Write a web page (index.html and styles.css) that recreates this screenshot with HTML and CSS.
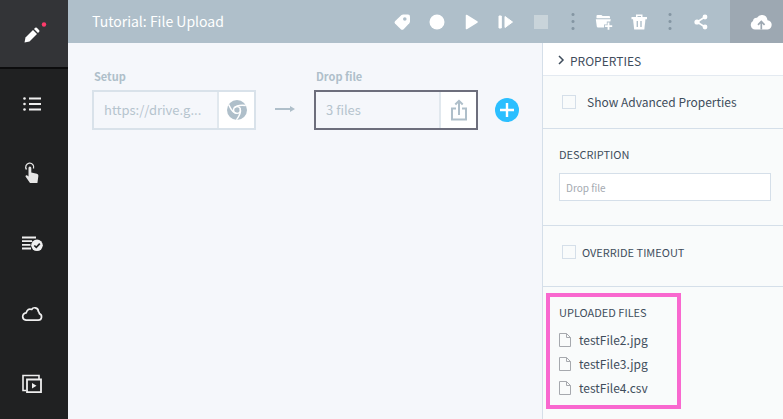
FILE: index.html
```html
<!DOCTYPE html>
<html lang="en">
<head>
    <meta charset="UTF-8">
    <meta name="viewport" content="width=device-width, initial-scale=1.0">
    <title>Tutorial: File Upload</title>
    <link rel="stylesheet" href="styles.css">
</head>
<body>
    <nav class="sidebar">
        <button class="nav-item active" aria-label="Editor">
            <svg width="24" height="24" viewBox="0 0 24 24">
                <path d="M4.500 20.500l1-5L13 8l4 4-7.500 7.500z" fill="#fff"/>
                <path d="M14 7l1.200-1.200q.8-.6 1.600 0l2.400 2.400q.6.800 0 1.600L18 11z" fill="#fff"/>
                <circle cx="24" cy="2.500" r="2.200" fill="#ff3b6b"/>
            </svg>
        </button>
        <button class="nav-item" aria-label="Test list">
            <svg width="20" height="20" viewBox="0 0 20 20" fill="#efefef">
                <path d="M7 3.500h12v2H7zM7 9h12v2H7zM7 14.500h12v2H7z"/>
                <circle cx="2.500" cy="4.500" r="1.300"/><circle cx="2.500" cy="10" r="1.300"/><circle cx="2.500" cy="15.500" r="1.300"/>
            </svg>
        </button>
        <button class="nav-item" aria-label="Shared steps">
            <svg width="20" height="22" viewBox="0 0 20 22">
                <path d="M4.500 6.500A4 4 0 1 1 11.500 5.500" fill="none" stroke="#e6e6e6" stroke-width="1.300"/>
                <path d="M6.500 5q0-1.500 1.400-1.500T9.300 5v4.500l5.500 1.300q1.700.5 1.600 2l-1 7.200H8L3.500 13.500q0-1.500 1.500-1.200L6.500 13.500z" fill="#e6e6e6"/>
            </svg>
        </button>
        <button class="nav-item" aria-label="Results">
            <svg width="22" height="18" viewBox="0 0 22 18">
                <path d="M1 2.500h14M1 6.200h10M1 9.800h8.500M1 13.500h9" stroke="#efefef" stroke-width="1.800"/>
                <circle cx="16" cy="10.300" r="5.800" fill="#efefef"/>
                <path d="M13.300 10.500l2 1.900 3.500-3.700" fill="none" stroke="#202122" stroke-width="1.700"/>
            </svg>
        </button>
        <button class="nav-item" aria-label="Cloud">
            <svg width="22" height="18" viewBox="0 0 22 18">
                <path d="M5 15.200h12.300a3.400 3.400 0 0 0 1-6.600q.2-1.500-1-2.200.2-3-3-3.600-2.500-.4-3.600 1.700Q6.800 3 5.200 7.800 1.700 8.300 1.700 11.700q.2 3 3.300 3.500z" fill="none" stroke="#efefef" stroke-width="1.700" stroke-linejoin="round"/>
            </svg>
        </button>
        <button class="nav-item" aria-label="Runs">
            <svg width="20" height="20" viewBox="0 0 20 20">
                <path d="M4 16.500H1V1.500h16v3.500" fill="none" stroke="#efefef" stroke-width="1.600"/>
                <path d="M5 5.500h14v12.700H5z" fill="none" stroke="#efefef" stroke-width="1.800"/>
                <path d="M10 9l4.500 2.800L10 14.500z" fill="#efefef"/>
            </svg>
        </button>
    </nav>

    <div class="main">
        <header class="topbar">
            <h1 class="title">Tutorial: File Upload</h1>
            <div class="tools">
                <button class="tool" aria-label="Labels">
                    <svg width="18" height="18" viewBox="0 0 18 18">
                        <path d="M2 8.200L8.500 2Q9.300 1.500 10.200 1.500H15Q17 1.500 17 3.500V8.500Q17 9.400 16.300 10.200L10.600 16.200Q9.200 17.300 7.800 16.200L2 10.600Q1 9.400 2 8.200z" fill="#fff"/>
                        <circle cx="11.800" cy="6" r="1.800" fill="#afbfca"/>
                    </svg>
                </button>
                <button class="tool" aria-label="Record">
                    <svg width="16" height="16" viewBox="0 0 16 16"><circle cx="8" cy="8" r="7.500" fill="#fff"/></svg>
                </button>
                <button class="tool" aria-label="Play">
                    <svg width="16" height="16" viewBox="0 0 16 16"><path d="M2.500 1.500L13 8 2.500 14.500z" fill="#fff" stroke="#fff" stroke-width="1.500" stroke-linejoin="round"/></svg>
                </button>
                <button class="tool" aria-label="Play step">
                    <svg width="16" height="16" viewBox="0 0 16 16"><path d="M0 2h2.300v12H0zM6 2.500L13.500 8 6 13.500z" fill="#fff" stroke="#fff" stroke-linejoin="round"/></svg>
                </button>
                <button class="tool" aria-label="Stop" disabled>
                    <svg width="16" height="16" viewBox="0 0 16 16"><path d="M0 1h14v14H0z" fill="#c9d4da"/></svg>
                </button>
                <span class="dots"></span>
                <button class="tool" aria-label="New folder">
                    <svg width="18" height="18" viewBox="0 0 18 18" fill="#fff">
                        <path d="M1.500 5.200V3q0-1 1-1H6q1 0 1.500 1H14q1 0 1 1v1.200z"/>
                        <path d="M.8 6.300h15l-.5 2.200h-3.500v3H9v3H3q-1 0-1.200-1z"/>
                        <path d="M12.600 9.500h1.800v2.700h2.800V14h-2.800v2.700h-1.800V14H9.900v-1.800h2.700z"/>
                    </svg>
                </button>
                <button class="tool" aria-label="Delete">
                    <svg width="16" height="18" viewBox="0 0 16 18" fill="#fff">
                        <path d="M5 5V1.500h6.500V5H10V3H6.500v2zM.5 4h15.500v2.300H.5z"/>
                        <path d="M2 6h12.500l-1.200 10.500H3.200z"/>
                        <path d="M6.300 8v6M10 8v6" stroke="#afbfca" stroke-width="1.400"/>
                    </svg>
                </button>
                <span class="dots"></span>
                <button class="tool" aria-label="Share">
                    <svg width="16" height="18" viewBox="0 0 16 18">
                        <path d="M12 4L4 9l8 5" fill="none" stroke="#fff" stroke-width="1.600"/>
                        <circle cx="12" cy="4" r="2.400" fill="#fff"/><circle cx="4" cy="9" r="2.600" fill="#fff"/><circle cx="12" cy="14" r="2.400" fill="#fff"/>
                    </svg>
                </button>
            </div>
            <button class="save" aria-label="Save">
                <svg width="22" height="18" viewBox="0 0 22 18">
                    <path d="M5 16.500A4.600 4.600 0 0 1 3 8Q3.500 4.500 7 4.700 9 1.500 12.500 2q4.500.6 5 5.200 4 .7 4.200 4.600-.2 4-4 4.700z" fill="#fff"/>
                    <path d="M11.300 16.500V9M8 11.800L11.300 8.500l3.300 3.300" fill="none" stroke="#9da8b2" stroke-width="1.700"/>
                </svg>
            </button>
        </header>

        <div class="workspace">
            <main class="canvas">
                <div class="step">
                    <span class="step-name">Setup</span>
                    <div class="step-box">
                        <span class="step-text">https://drive.g...</span>
                        <span class="step-icon">
                            <svg width="20" height="20" viewBox="0 0 20 20">
                                <circle cx="10" cy="10" r="10" fill="#afbfca"/>
                                <g fill="none" stroke="#fff" stroke-width="1.400">
                                    <circle cx="10" cy="10" r="3.400"/>
                                    <path d="M7.200 8Q10 4.500 18.800 5.500"/>
                                    <path d="M7.200 8Q10 4.500 18.800 5.500" transform="rotate(120 10 10)"/>
                                    <path d="M7.200 8Q10 4.500 18.800 5.500" transform="rotate(240 10 10)"/>
                                </g>
                            </svg>
                        </span>
                    </div>
                </div>
                <svg class="arrow" width="20" height="8" viewBox="0 0 20 8">
                    <path d="M0 3h15V1l5 3-5 3V5H0z" fill="#afbfca"/>
                </svg>
                <div class="step">
                    <span class="step-name">Drop file</span>
                    <div class="step-box selected">
                        <span class="step-text">3 files</span>
                        <span class="step-icon">
                            <svg width="18" height="22" viewBox="0 0 18 22" fill="none" stroke="#afbfca" stroke-width="2">
                                <path d="M6 9.500H2V20.500h14V9.500h-4M9 16V2M5.300 5.500L9 1.800l3.700 3.700"/>
                            </svg>
                        </span>
                    </div>
                </div>
                <button class="add" aria-label="Add step">
                    <svg width="24" height="24" viewBox="0 0 24 24">
                        <circle cx="12" cy="12" r="12" fill="#2bbfff"/>
                        <path d="M12 5v14M5 12h14" stroke="#fff" stroke-width="2.400"/>
                    </svg>
                </button>
            </main>

            <aside class="panel">
                <h2 class="panel-header">
                    <svg width="6" height="10" viewBox="0 0 6 10"><path d="M1 0l4 4-4 4" fill="none" stroke="#3f4d5c" stroke-width="1.500"/></svg>
                    PROPERTIES
                </h2>
                <section class="section advanced">
                    <label class="check"><input type="checkbox"> Show Advanced Properties</label>
                </section>
                <section class="section description">
                    <label class="caption" for="description">DESCRIPTION</label>
                    <input type="text" id="description" placeholder="Drop file">
                </section>
                <section class="section timeout">
                    <label class="check caption"><input type="checkbox"> OVERRIDE TIMEOUT</label>
                </section>
                <section class="uploads">
                    <h3 class="caption">UPLOADED FILES</h3>
                    <ul class="files">
                        <li>
                            <svg width="12" height="14" viewBox="0 0 12 14" fill="none" stroke="#a6a9ae"><path d="M.5.5h7l4 4v9H.5zM7.500.5v4h4"/></svg>
                            testFile2.jpg
                        </li>
                        <li>
                            <svg width="12" height="14" viewBox="0 0 12 14" fill="none" stroke="#a6a9ae"><path d="M.5.5h7l4 4v9H.5zM7.500.5v4h4"/></svg>
                            testFile3.jpg
                        </li>
                        <li>
                            <svg width="12" height="14" viewBox="0 0 12 14" fill="none" stroke="#a6a9ae"><path d="M.5.5h7l4 4v9H.5zM7.500.5v4h4"/></svg>
                            testFile4.csv
                        </li>
                    </ul>
                </section>
            </aside>
        </div>
    </div>
</body>
</html>
```
FILE: styles.css
```css
* {
    box-sizing: border-box;
}
body {
    margin: 0;
    min-height: 100vh;
    display: flex;
    font-family: "Noto Sans CJK SC", "Open Sans", sans-serif;
    font-size: 12px;
    line-height: 20px;
    color: #3f4d5c;
    background-color: #f5f7fb;
}
button {
    display: flex;
    align-items: center;
    justify-content: center;
    padding: 0;
    border: none;
    background: none;
    cursor: pointer;
}
svg {
    flex: none;
    overflow: visible;
}

/* sidebar */
.sidebar {
    width: 68px;
    flex: none;
    background-color: #202122;
}
.nav-item {
    width: 100%;
    height: 70px;
    padding-right: 4px;
}
.nav-item.active {
    height: 69px;
    background-color: #333437;
    border-bottom: 2px solid #0c0c0d;
}

.main {
    flex: 1;
    min-width: 0;
    display: flex;
    flex-direction: column;
}

/* top bar */
.topbar {
    display: flex;
    height: 43px;
    background-color: #afbfca;
}
.title {
    flex: 1;
    margin: 0;
    padding-left: 24px;
    font-size: 14px;
    font-weight: 400;
    line-height: 42px;
    color: #fff;
}
.tools {
    display: flex;
    align-items: center;
    padding-right: 12px;
}
.tool {
    width: 35px;
    height: 42px;
}
.dots {
    width: 27px;
    height: 21px;
    background: radial-gradient(circle, #8496a3 1px, transparent 2px) center / 6px 7px repeat-y;
}
.save {
    width: 53px;
    padding-left: 9px;
    background-color: #9da8b2;
}

/* canvas */
.workspace {
    flex: 1;
    display: flex;
}
.canvas {
    flex: 1;
    display: flex;
    align-items: flex-start;
    padding: 23px 16px 23px 24px;
}
.step {
    width: 164px;
}
.step-name {
    display: block;
    padding-left: 2px;
    margin-bottom: 4px;
    font-size: 11px;
    font-weight: 700;
    color: #afbfca;
}
.step-box {
    display: flex;
    height: 40px;
    border: 2px solid #d9e2ea;
}
.step-box.selected {
    border-color: #6d6e7c;
}
.step-text {
    flex: 1;
    padding: 0 10px;
    white-space: nowrap;
    font-size: 13px;
    line-height: 36px;
    color: #b5c4ce;
}
.step-icon {
    width: 37px;
    display: flex;
    align-items: center;
    justify-content: center;
    border-left: 2px solid #e1e8ee;
    background-color: #fff;
}
.arrow {
    margin: 39px 19px 0;
}
.add {
    margin: 32px 0 0 17px;
}

/* properties panel */
.panel {
    width: 241px;
    flex: none;
    border-left: 1px solid #d5dfe9;
    background-color: #f9fbfb;
}
.panel-header {
    display: flex;
    align-items: center;
    gap: 6px;
    height: 33px;
    margin: 0;
    padding: 4px 15px 0;
    border-bottom: 1px solid #e4eaf1;
    background-color: #fff;
    font-size: 12px;
    font-weight: 400;
}
.section {
    padding: 16px 12px 16px 16px;
    border-bottom: 1px solid #d5dfe9;
}
.caption {
    display: block;
    margin: 0;
    font-size: 11px;
    font-weight: 400;
}
.check {
    display: flex;
    align-items: center;
    gap: 6px;
}
.check input {
    appearance: none;
    flex: none;
    width: 14px;
    height: 14px;
    margin: 0 0 0 3px;
    border: 1px solid #d5dfe9;
}
.advanced .check {
    gap: 11px;
}
.description {
    padding-top: 15px;
    padding-bottom: 24px;
}
.description input {
    display: block;
    width: 100%;
    height: 28px;
    margin-top: 9px;
    padding: 0 6px;
    border: 1px solid #d5dfe9;
    background-color: #fff;
    font: inherit;
    font-size: 10px;
}
.description input::placeholder {
    color: #a3a9b0;
}
.timeout {
    padding-bottom: 24px;
}
.uploads {
    width: 135px;
    margin: 6px 3px 10px;
    padding: 5px 9px;
    border: 4px solid #f968cf;
}
.files {
    margin: 6px 0 0;
    padding: 0;
    list-style: none;
}
.files li {
    display: flex;
    align-items: center;
    gap: 8px;
    line-height: 24px;
}
```
